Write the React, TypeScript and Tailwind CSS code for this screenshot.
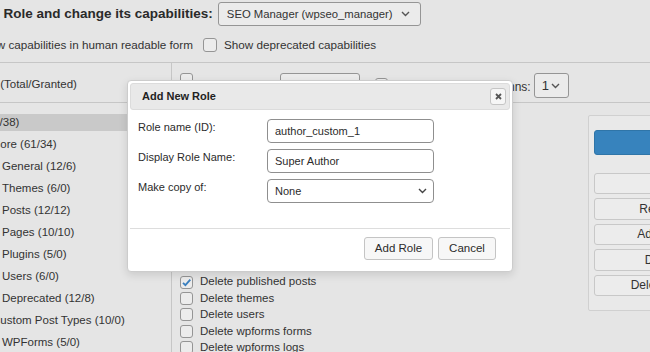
import React from 'react';

const groups = [
  { label: 'All (38/38)', indent: 'pl-[11px]', active: true },
  { label: 'Core (61/34)', indent: 'pl-[36px]' },
  { label: 'General (12/6)', indent: 'pl-[46px]' },
  { label: 'Themes (6/0)', indent: 'pl-[46px]' },
  { label: 'Posts (12/12)', indent: 'pl-[46px]' },
  { label: 'Pages (10/10)', indent: 'pl-[46px]' },
  { label: 'Plugins (5/0)', indent: 'pl-[46px]' },
  { label: 'Users (6/0)', indent: 'pl-[46px]' },
  { label: 'Deprecated (12/8)', indent: 'pl-[46px]' },
  { label: 'Custom Post Types (10/0)', indent: 'pl-[36px]' },
  { label: 'WPForms (5/0)', indent: 'pl-[46px]' },
];

const caps = [
  { label: 'Create users', checked: true },
  { label: 'Customize', checked: true },
  { label: 'Delete others pages', checked: true },
  { label: 'Delete others posts', checked: true },
  { label: 'Delete pages', checked: true },
  { label: 'Delete plugins', checked: false },
  { label: 'Delete posts', checked: true },
  { label: 'Delete private pages', checked: true },
  { label: 'Delete private posts', checked: true },
  { label: 'Delete published pages', checked: true },
  { label: 'Delete published posts', checked: true },
  { label: 'Delete themes', checked: false },
  { label: 'Delete users', checked: false },
  { label: 'Delete wpforms forms', checked: false },
  { label: 'Delete wpforms logs', checked: false },
];

const sideButtons = ['Add Role', 'Rename Role', 'Add Capability', 'Delete Role', 'Delete Capability'];

function Chevron({ color = '#555' }: { color?: string }) {
  return (
    <svg width="9" height="6" viewBox="0 0 9 6" fill="none" className="shrink-0">
      <path d="M1 1l3.5 3.5L8 1" stroke={color} strokeWidth="1.4" />
    </svg>
  );
}

function Checkbox({ checked = false, size = 'w-[13px] h-[13px]' }: { checked?: boolean; size?: string }) {
  return (
    <span className={`${size} shrink-0 flex items-center justify-center border border-[#959595] rounded-[3px] bg-[#ececec]`}>
      {checked && (
        <svg width="11" height="11" viewBox="0 0 11 11" fill="none">
          <path d="M2 5.8L4.4 8.2L9.3 2.6" stroke="#3a7fbf" strokeWidth="1.8" />
        </svg>
      )}
    </span>
  );
}

function AddRoleDialog() {
  return (
    <div className="absolute left-[127px] top-[80px] w-[386px] h-[192px] bg-white border border-[#cccccc] rounded-[4px] p-[2px] shadow-[0_3px_8px_rgba(0,0,0,0.12)]">
      <div className="flex items-center justify-between h-[27px] pl-[11px] pr-[3px] bg-[#e9e9e9] border border-[#dcdcdc] rounded-[3px]">
        <span className="text-[11px] font-bold text-[#222]">Add New Role</span>
        <button className="w-[16px] h-[17px] flex items-center justify-center bg-[#f6f6f6] border border-[#c5c5c5] rounded-[3px]">
          <svg width="7" height="7" viewBox="0 0 7 7" fill="none">
            <path d="M1 1l5 5M6 1L1 6" stroke="#555" strokeWidth="1.8" />
          </svg>
        </button>
      </div>

      <div className="pl-[8px] pt-[9px] pb-[25px] flex flex-col gap-[6px] text-[11px] text-[#2b2b2b]">
        <div className="flex items-start">
          <label className="w-[129px] pt-[1px] leading-[14px]">Role name (ID):</label>
          <input
            readOnly
            defaultValue="author_custom_1"
            className="w-[167px] h-[24px] px-[7px] border border-[#8f8f8f] rounded-[4px] bg-white outline-none"
          />
        </div>
        <div className="flex items-start">
          <label className="w-[129px] pt-[1px] leading-[14px]">Display Role Name:</label>
          <input
            readOnly
            defaultValue="Super Author"
            className="w-[167px] h-[24px] px-[7px] border border-[#8f8f8f] rounded-[4px] bg-white outline-none"
          />
        </div>
        <div className="flex items-start">
          <label className="w-[129px] pt-[1px] leading-[14px]">Make copy of:</label>
          <div className="w-[167px] h-[24px] pl-[7px] pr-[6px] flex items-center justify-between border border-[#8f8f8f] rounded-[4px] bg-white">
            <span>None</span>
            <Chevron color="#444" />
          </div>
        </div>
      </div>

      <div className="border-t border-[#dddddd] flex justify-end gap-[5px] pt-[8px] pr-[14px] text-[11.5px] text-[#2b2b2b]">
        <button className="w-[69px] h-[23px] bg-[#f7f7f7] border border-[#c4c4c4] rounded-[3px]">Add Role</button>
        <button className="w-[58px] h-[23px] bg-[#f7f7f7] border border-[#c4c4c4] rounded-[3px]">Cancel</button>
      </div>
    </div>
  );
}

export default function App() {
  return (
    <div className="relative w-[650px] h-[352px] overflow-hidden bg-[#e5e5e5] font-['Liberation_Sans',Arial,sans-serif] text-[#333]">
      <div className="-ml-[44px] w-[900px]">
        {/* page heading */}
        <div className="flex items-center h-[26px] pt-[2px]">
          <h2 className="pl-[4px] text-[13.5px] font-bold text-[#2a2a2a] whitespace-nowrap">
            Select Role and change its capabilities:
          </h2>
          <div className="ml-[5px] w-[203px] h-[24px] shrink-0 pl-[8px] pr-[10px] flex items-center justify-between border border-[#959595] rounded-[3px] bg-[#ebebeb] text-[11.3px] whitespace-nowrap">
            <span>SEO Manager (wpseo_manager)</span>
            <Chevron />
          </div>
        </div>

        {/* options */}
        <div className="flex items-center mt-[12px] h-[14px] text-[11.7px] whitespace-nowrap">
          <span className="ml-[2px]">
            <Checkbox size="w-[14px] h-[14px]" />
          </span>
          <span className="ml-[4px]">Show capabilities in human readable form</span>
          <span className="ml-[10px]">
            <Checkbox size="w-[14px] h-[14px]" />
          </span>
          <span className="ml-[7px]">Show deprecated capabilities</span>
        </div>

        {/* editor table */}
        <div className="mt-[10px] h-[300px] flex border-t border-[#c6c6c6]">
          <div className="w-[216px] shrink-0 border-r border-[#c6c6c6] text-[11.5px]">
            <div className="h-[40px] pl-[9px] pt-[5px] flex items-center border-b border-[#c6c6c6] whitespace-nowrap">
              Group (Total/Granted)
            </div>
            <div className="pt-[11px] flex flex-col gap-[5px]">
              {groups.map((g) => (
                <div
                  key={g.label}
                  className={`h-[17px] flex items-center whitespace-nowrap ${g.indent} ${g.active ? 'bg-[#c9c9c9]' : ''}`}
                >
                  {g.label}
                </div>
              ))}
            </div>
          </div>

          <div className="flex-1">
            <div className="h-[40px] flex items-start border-b border-[#c6c6c6] text-[12px]">
              <span className="ml-[8px] mt-[10px]">
                <Checkbox />
              </span>
              <div className="ml-[87px] mt-[10px] w-[80px] h-[25px] border border-[#959595] rounded-[3px] bg-[#ebebeb]" />
              <span className="ml-[15px] mt-[15px]">
                <Checkbox />
              </span>
              <div className="ml-[92px] mt-[10px] h-[25px] flex items-center gap-[3px] whitespace-nowrap">
                <span className="pt-[3px]">Columns:</span>
                <div className="w-[35px] h-[25px] pl-[7px] pr-[8px] flex items-center justify-between border border-[#959595] rounded-[3px] bg-[#ebebeb] text-[13px]">
                  <span>1</span>
                  <Chevron />
                </div>
              </div>
            </div>

            <div className="flex">
              <div className="w-[416px] shrink-0 pl-[8px] pt-[7px] text-[11.5px]">
                {caps.map((c) => (
                  <div key={c.label} className="h-[16.4px] flex items-center gap-[7px] whitespace-nowrap">
                    <Checkbox checked={c.checked} />
                    <span>{c.label}</span>
                  </div>
                ))}
              </div>

              <div className="mt-[12px] w-[176px] h-[196px] shrink-0 border border-[#d0d0d0] rounded-[2px] bg-[#e9e9e9] px-[5px] pt-[13px]">
                <button className="w-full h-[25px] rounded-[3px] bg-[#3783bd] border border-[#2f75a8] text-white text-[12px]">
                  Update
                </button>
                <div className="mt-[18px] flex flex-col gap-[4px]">
                  {sideButtons.map((b) => (
                    <button
                      key={b}
                      className="w-full h-[21.5px] rounded-[3px] bg-[#ececec] border border-[#c8c8c8] text-[12px] text-[#333] whitespace-nowrap"
                    >
                      {b}
                    </button>
                  ))}
                </div>
              </div>
            </div>
          </div>
        </div>
      </div>

      <AddRoleDialog />
    </div>
  );
}
